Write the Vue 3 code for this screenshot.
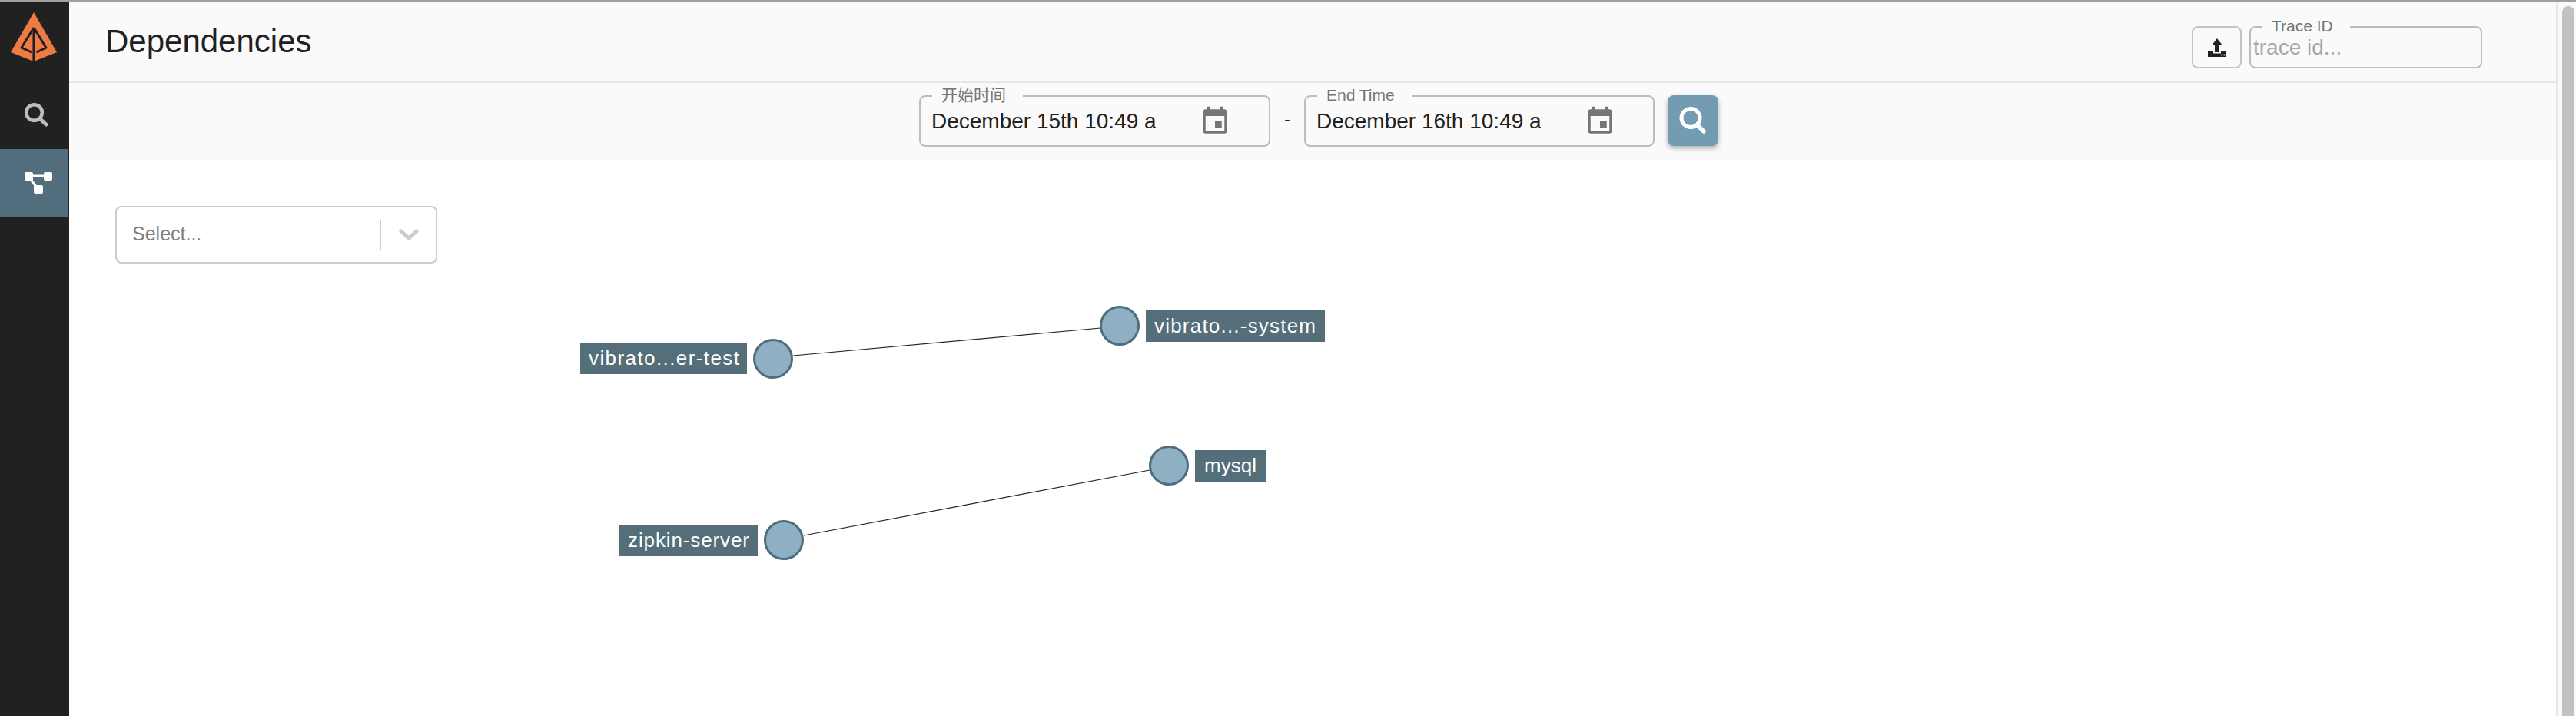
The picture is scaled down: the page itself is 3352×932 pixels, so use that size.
<script setup>
// graph coords are page coords, the svg viewBox is offset to match
const nodes = [
  { cx: 1006, cy: 467, label: "vibrato...er-test", x: 755, y: 446, w: 217, tx: 766, tw: 196 },
  { cx: 1457, cy: 424, label: "vibrato...-system", x: 1491, y: 404, w: 233, tx: 1502, tw: 210 },
  { cx: 1521, cy: 606, label: "mysql", x: 1555, y: 586, w: 93, tx: 1567, tw: 68 },
  { cx: 1020, cy: 703, label: "zipkin-server", x: 806, y: 683, w: 180, tx: 817, tw: 158 },
];
const edges = [
  { x1: 1032, y1: 463, x2: 1432, y2: 427 },
  { x1: 1046, y1: 697, x2: 1496, y2: 612 },
];
const ranges = [
  { label: "开始时间", value: "December 15th 10:49 am" },
  { label: "End Time", value: "December 16th 10:49 am" },
];
</script>

<template>
  <div class="page">
    <div class="topline"></div>
    <div class="shell">
      <aside class="sidebar">
        <div class="logo">
          <svg width="90" height="92" viewBox="0 0 90 92">
            <polygon points="44,14 74,66 44,78 14,66" fill="#ee7b43" />
            <path d="M44 34 L28 60 L41 66 M44 34 L60 60 L47.5 66" fill="none" stroke="#212121" stroke-width="3" />
            <path d="M44 34 V78" stroke="#212121" stroke-width="3.2" />
          </svg>
        </div>
        <a class="nav-item">
          <svg width="88" height="88" viewBox="0 0 88 88">
            <circle cx="44.5" cy="40.5" r="10.3" fill="none" stroke="#bdbdbd" stroke-width="4.6" />
            <path d="M52.5 49 L60 56" stroke="#bdbdbd" stroke-width="5" stroke-linecap="round" />
          </svg>
        </a>
        <a class="nav-item active">
          <svg width="88" height="88" viewBox="0 0 88 88">
            <path d="M40 35 H60 M39 38 L47 49" stroke="#fff" stroke-width="3.2" fill="none" />
            <rect x="32" y="30" width="11" height="11" rx="2" fill="#fff" />
            <rect x="57" y="30" width="11" height="11" rx="2" fill="#fff" />
            <rect x="44" y="47" width="12" height="11" rx="2" fill="#fff" />
          </svg>
        </a>
      </aside>

      <div class="content">
        <header class="header">
          <h1 class="title">Dependencies</h1>
          <div class="trace-tools">
            <button class="upload-btn">
              <svg width="26" height="26" viewBox="0 0 26 26">
                <path d="M13 1 L20 10 H16 V19 H10 V10 H6 Z" fill="#212121" />
                <path d="M1 18 H8 V20.5 H18 V18 H25 V25 H1 Z" fill="#212121" />
                <rect x="18.5" y="21.6" width="1.8" height="1.8" fill="#fff" />
                <rect x="21.6" y="21.6" width="1.8" height="1.8" fill="#fff" />
              </svg>
            </button>
            <div class="field trace-field">
              <span class="field-label">Trace ID</span>
              <input class="trace-input" placeholder="trace id..." />
            </div>
          </div>
        </header>

        <div class="toolbar">
          <template v-for="(r, i) in ranges" :key="r.label">
            <span v-if="i === 1" class="dash">-</span>
            <div class="field date-field" :class="{ first: i === 0 }">
              <span class="field-label">{{ r.label }}</span>
              <input class="date-input" readonly :value="r.value" />
              <svg class="calendar" width="42" height="42" viewBox="0 0 24 24">
                <path fill="#757575" d="M17 12h-5v5h5v-5zM16 1v2H8V1H6v2H5c-1.11 0-1.99.9-1.99 2L3 19c0 1.1.89 2 2 2h14c1.1 0 2-.9 2-2V5c0-1.1-.9-2-2-2h-1V1h-2zm3 18H5V8h14v11z" />
              </svg>
            </div>
          </template>
          <button class="search-btn">
            <svg width="36" height="38" viewBox="0 0 36 38">
              <circle cx="15" cy="15.5" r="12" fill="none" stroke="#fff" stroke-width="5" />
              <path d="M24 25 L32 33" stroke="#fff" stroke-width="5.4" stroke-linecap="round" />
            </svg>
          </button>
        </div>

        <main class="main">
          <svg class="graph" width="3236" height="724" viewBox="90 208 3236 724">
            <line v-for="(e, i) in edges" :key="i" v-bind="e" stroke="#222" stroke-width="1.2" />
            <g v-for="n in nodes" :key="n.label">
              <circle :cx="n.cx" :cy="n.cy" r="24.5" fill="#8fafc2" stroke="#4f6d7e" stroke-width="3" />
              <rect :x="n.x" :y="n.y" :width="n.w" height="41" fill="#546e7a" />
              <text :x="n.tx" :y="n.y + 29" :textLength="n.tw" class="node-text">{{ n.label }}</text>
            </g>
          </svg>
          <div class="select-box">
            <span class="select-placeholder">Select...</span>
            <span class="select-sep"></span>
            <svg class="select-arrow" width="26" height="16" viewBox="0 0 26 16">
              <path d="M3 3 L13 12 L23 3" fill="none" stroke="#cccccc" stroke-width="5" stroke-linecap="round" />
            </svg>
          </div>
        </main>
      </div>

      <div class="scrollbar"><div class="thumb"></div></div>
    </div>
  </div>
</template>

<style>
html,
body {
  margin: 0;
  overflow: hidden;
  background: #fff;
}
</style>

<style scoped>
.page {
  width: 3352px;
  height: 932px;
  display: flex;
  flex-direction: column;
  font-family: "Liberation Sans", "Noto Sans CJK SC", sans-serif;
  color: #212121;
}
.topline {
  height: 2px;
  background: #a39e9e;
  flex: none;
}
.shell {
  flex: 1;
  display: flex;
  min-height: 0;
}
.sidebar {
  width: 90px;
  flex: none;
  background: #212121;
  display: flex;
  flex-direction: column;
}
.logo {
  height: 104px;
}
.nav-item {
  display: block;
  width: 88px;
  height: 88px;
}
.nav-item svg {
  display: block;
}
.nav-item.active {
  background: #526e7e;
}
.content {
  flex: 1;
  min-width: 0;
  display: flex;
  flex-direction: column;
}
.header {
  height: 106px;
  box-sizing: border-box;
  flex: none;
  background: #fafafa;
  border-bottom: 2px solid #e6e6e6;
  display: flex;
  justify-content: space-between;
  align-items: flex-start;
  padding: 0 96px 0 47px;
}
.title {
  margin: 27px 0 0;
  font-size: 42px;
  line-height: 50px;
  font-weight: 400;
}
.trace-tools {
  display: flex;
  gap: 10px;
  margin-top: 32px;
}
.upload-btn {
  width: 65px;
  height: 55px;
  box-sizing: border-box;
  padding: 0;
  border: 2px solid #c4c4c4;
  border-radius: 8px;
  background: transparent;
  display: flex;
  align-items: center;
  justify-content: center;
}
.field {
  position: relative;
  box-sizing: border-box;
  border: 2px solid #bdbdbd;
  border-radius: 8px;
  background: #fafafa;
}
.field-label {
  position: absolute;
  top: -14px;
  left: 15px;
  padding: 0 22px 0 12px;
  background: #fafafa;
  font-size: 21px;
  line-height: 24px;
  color: #757575;
}
.trace-field {
  width: 303px;
  height: 55px;
}
.trace-input {
  width: 280px;
  margin: 0;
  padding: 0 0 0 3px;
  border: 0;
  outline: 0;
  background: transparent;
  font: 28px/51px "Liberation Sans", sans-serif;
}
.trace-input::placeholder {
  color: #a8a8a8;
  opacity: 1;
}
.toolbar {
  height: 100px;
  box-sizing: border-box;
  flex: none;
  background: #fafafa;
  display: flex;
  justify-content: flex-start;
  align-items: flex-start;
  padding: 16px 0 0 1106px;
}
.date-field {
  width: 456px;
  height: 67px;
  display: flex;
  align-items: center;
}
.date-field.first {
  width: 457px;
}
.date-input {
  width: 292px;
  margin: 0 0 0 14px;
  padding: 0;
  border: 0;
  outline: 0;
  background: transparent;
  color: #212121;
  font: 28px/63px "Liberation Sans", sans-serif;
}
.calendar {
  margin-left: 56px;
}
.dash {
  width: 44px;
  text-align: center;
  font-size: 24px;
  line-height: 62px;
}
.search-btn {
  width: 66px;
  height: 66px;
  margin-left: 17px;
  padding: 0;
  border: 0;
  border-radius: 8px;
  background: #739cb3;
  box-shadow: 0 3px 6px rgba(0, 0, 0, 0.3);
  display: flex;
  align-items: center;
  justify-content: center;
}
.main {
  flex: 1;
  position: relative;
  background: #fff;
  padding: 60px 0 0 60px;
}
.graph {
  position: absolute;
  left: 0;
  top: 0;
}
.node-text {
  font-size: 26px;
  fill: #fff;
}
.select-box {
  position: relative;
  width: 419px;
  height: 75px;
  box-sizing: border-box;
  border: 2px solid #cccccc;
  border-radius: 8px;
  background: #fff;
  display: flex;
  align-items: center;
}
.select-placeholder {
  margin-left: 20px;
  font-size: 25px;
  color: #808080;
  flex: 1;
  margin-top: -3px;
}
.select-sep {
  width: 2px;
  height: 40px;
  background: #cccccc;
}
.select-arrow {
  margin: 0 22px 0 23px;
}
.scrollbar {
  width: 26px;
  flex: none;
  box-sizing: border-box;
  background: #fafafa;
  border-left: 2px solid #e8e8e8;
  padding: 6px 2px 0 6px;
}
.thumb {
  height: 100%;
  background: #c1c1c1;
  border-radius: 8px 8px 0 0;
}
</style>
